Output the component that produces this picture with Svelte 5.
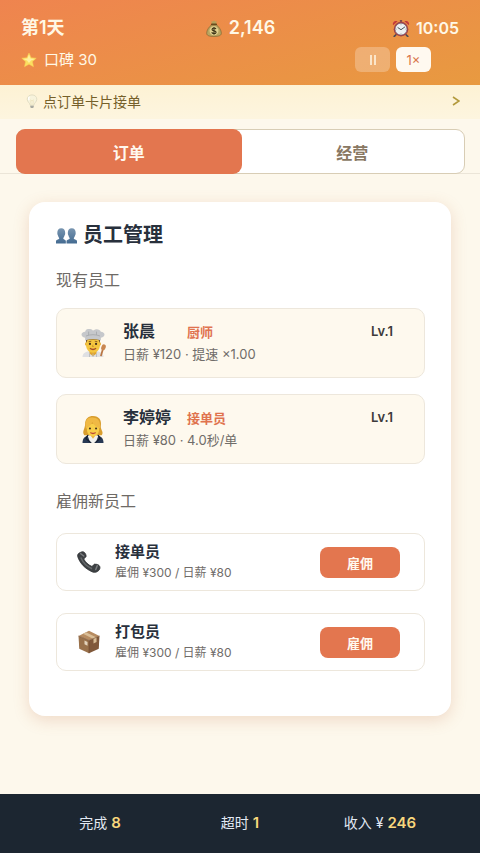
<script lang="ts">
	let tab: string = $state('orders');
	let paused: boolean = $state(false);

	const staff = [
		{ icon: 'chef', name: '张晨', role: '厨师', detail: '日薪 ¥120 · 提速 ×1.00', level: 1 },
		{ icon: 'clerk', name: '李婷婷', role: '接单员', detail: '日薪 ¥80 · 4.0秒/单', level: 1 }
	];

	const openings = [
		{ icon: 'phone', role: '接单员', detail: '雇佣 ¥300 / 日薪 ¥80' },
		{ icon: 'box', role: '打包员', detail: '雇佣 ¥300 / 日薪 ¥80' }
	];

	const totals = [
		{ label: '完成', value: 8 },
		{ label: '超时', value: 1 },
		{ label: '收入 ¥', value: 246 }
	];
</script>

{#snippet icon(name: string, size: number)}
	<svg width={size} height={size} viewBox="0 0 32 32" aria-hidden="true">
		{#if name === 'money'}
			<path d="M11 3l3 2 2-3 2 3 3-2-2 7h-6z" fill="#b3a05c" />
			<path d="M12 10c-5 4-9 10-9 15 0 4 3 6 13 6s13-2 13-6c0-5-4-11-9-15z" fill="#b9a561" stroke="#6c5b2c" />
			<path d="M12 9.500h8" stroke="#6a4a1c" stroke-width="3" stroke-linecap="round" />
			<circle cx="16" cy="21" r="8" fill="#e2d190" />
			<path d="M19.500 18c-.6-1.500-2-2-3.500-2-2 0-3.500 1-3.500 2.500 0 3.500 7.200 1.500 7.200 5 0 1.600-1.700 2.500-3.700 2.500s-3.500-.8-4-2.500M16 14v14" fill="none" stroke="#3c3216" stroke-width="2" />
		{:else if name === 'star'}
			<path d="M16 2l4.300 9.300 10.200 1.100-7.600 6.900 2.100 10.100L16 24.300 7 29.400l2.100-10.100-7.600-6.900 10.200-1.100z" fill="#fbdf62" stroke="#f8cf52" stroke-linejoin="round" />
			<path d="M16 5l3 8 9 1-8 3-4 5-4-5-8-3 9-1z" fill="#fff0a0" />
		{:else if name === 'clock'}
			<path d="M7 28l-3 3M25 28l3 3" stroke="#4d4a55" stroke-width="3" stroke-linecap="round" />
			<path d="M2 11c-2-5 3-9 8-7zM30 11c2-5-3-9-8-7z" fill="#c4393b" />
			<path d="M16 5V2" stroke="#754149" stroke-width="4" />
			<circle cx="16" cy="18" r="13" fill="#a23f48" />
			<circle cx="16" cy="18" r="10.500" fill="#edf0f2" stroke="#6c606a" />
			<path d="M10 15l6 4 7-5" fill="none" stroke="#374147" stroke-width="1.600" />
			<path d="M16 9v2M16 25v2M7 18h2M23 18h2" stroke="#8d979b" />
		{:else if name === 'bulb'}
			<path d="M16 2C9 2 5 7 5 12c0 6 6 8 7 14h8c1-6 7-8 7-14 0-5-4-10-11-10z" fill="#f7f3dc" stroke="#d6d2b8" stroke-width="1.500" />
			<path d="M12 13l4 3 4-3M14 25l-1-10M18 25l1-10" fill="none" stroke="#e3d6a4" />
			<path d="M12 27h8v3l-2 2h-4l-2-2z" fill="#a9aaa1" />
			<path d="M10 6c-2 2-2 5-1 8" fill="none" stroke="#fff" stroke-width="3" />
		{:else if name === 'people'}
			<defs>
				<linearGradient id="people-fill" x2="0" y2="1">
					<stop stop-color="#7895b0" />
					<stop offset="1" stop-color="#446b91" />
				</linearGradient>
			</defs>
			<path d="M8 5c-4 0-6 3-6 7 0 2 .5 3 1 4 .5 2 1 3 2 4 0 2-4 2-5 4v4h15v-4c-1-2-4-2-4-4 1-1 1.500-2 2-4 .7-1 1-2 1-4 0-4-2-7-6-7z" fill="url(#people-fill)" />
			<path d="M24 5c-4 0-6 3-6 7 0 2 .5 3 1 4 .5 2 1 3 2 4 0 2-4 2-5 4v4h16v-4c-1-2-5-2-5-4 1-1 1.500-2 2-4 .7-1 1-2 1-4 0-4-2-7-6-7z" fill="url(#people-fill)" />
		{:else if name === 'chef'}
			<path d="M4 32c0-5 4-7 12-7s12 2 12 7z" fill="#dfe0e2" />
			<path d="M12 24h8v4l-4 3-4-3z" fill="#dfa52f" />
			<path d="M8 10v8c0 6 4 9 8 9s8-3 8-9v-8z" fill="#f5c63f" />
			<path d="M7.500 15c-1 0-1 4 1 4zM24.500 15c1 0 1 4-1 4z" fill="#e6ad31" />
			<path d="M8 10v6l2-4h12l2 4v-6z" fill="#70502e" />
			<path d="M7 10C1 9 2 3 7 3c1-4 7-4 9-1 3-3 8-2 9 1 5 0 6 6 0 7v3c-6-2-12-2-18 0z" fill="#c6c8cb" />
			<path d="M8 8c5-2 11-2 16 0M11 3v4M20 3v4" fill="none" stroke="#a7a9ad" />
			<circle cx="12.500" cy="17" r="1.300" fill="#49331d" />
			<circle cx="19.500" cy="17" r="1.300" fill="#49331d" />
			<path d="M11 14.500l3-.5M18 14l3 .5" stroke="#8a5d21" />
			<path d="M12.500 22c2 1.700 5 1.700 7 0" fill="none" stroke="#a64d2a" stroke-width="1.500" />
			<path d="M16 18l-.7 2h1.500" fill="none" stroke="#cc8f26" />
			<path d="M16 28v4M12 28v4M20 28v4" stroke="#b8babd" />
			<path d="M27 24l-2 7" stroke="#b97643" stroke-width="2" />
			<ellipse cx="28" cy="21" rx="2.500" ry="3.500" fill="#ca8750" transform="rotate(20 28 21)" />
		{:else if name === 'clerk'}
			<path d="M6 23C3 19 7 16 7 10 7 4 11 1 16 1c7 0 10 5 9 11-1 5 4 7 1 11z" fill="#d99e2e" />
			<path d="M4 32c0-6 3-8 8-9h8c5 1 8 3 8 9z" fill="#283954" />
			<path d="M12 22h8l1 3-5 7-5-7z" fill="#edb73f" />
			<path d="M10 24l3-1 3 4 3-4 3 1-3 8h-6z" fill="#f1f1ed" />
			<path d="M10 23l-2 4 6 5M22 23l2 4-6 5" fill="none" stroke="#151e30" stroke-width="1.300" />
			<path d="M9 10v6c0 5 3 8 7 8s7-3 7-8v-6z" fill="#f8cf4a" />
			<path d="M8 16C6 5 10 2 17 3c5 0 8 5 7 12-4-1-7-3-9-7-1 4-4 5-7 8z" fill="#f0b944" />
			<circle cx="12.500" cy="15.500" r="1.200" fill="#49331d" />
			<circle cx="19.500" cy="15.500" r="1.200" fill="#49331d" />
			<path d="M13 20c2 1.500 4 1.500 6 0" fill="none" stroke="#bc473a" stroke-width="1.500" />
		{:else if name === 'phone'}
			<path d="M5 3c3-2 6 0 7 4 1 3-2 3-3 5 2 4 6 8 11 10 2-1 2-4 5-3 4 0 7 3 5 7-2 3-6 5-10 3C11 25 4 18 1 9 0 6 2 4 5 3z" fill="#3e4144" stroke="#282b2e" />
			<path d="M5 10c3 7 8 12 15 15" fill="none" stroke="#666a6c" stroke-width="2" />
			<path d="M5 5l4 3M27 21l-2 5" stroke="#7b7e80" stroke-width="2" stroke-linecap="round" />
		{:else if name === 'box'}
			<path d="M2 8l14 6v17L3 25z" fill="#99714b" />
			<path d="M30 8l-14 6v17l13-6z" fill="#80583a" />
			<path d="M2 8l14-7 14 7-14 6z" fill="#b78c61" />
			<path d="M8 5l4-2 14 7v6l-4 2v-6z" fill="#d9bd96" />
			<path d="M16 14v17M2 8l14 6 14-6" fill="none" stroke="#6f4c31" stroke-width=".8" />
			<path d="M10 14l4 2v5l-4-2z" fill="#e3d3bc" />
		{/if}
	</svg>
{/snippet}

<div class="page">
	<header>
		<div class="stats">
			<strong>第1天</strong>
			<strong class="stat">{@render icon('money', 18)} 2,146</strong>
			<strong class="stat time">{@render icon('clock', 18)} 10:05</strong>
		</div>
		<div class="controls">
			<span class="fame">{@render icon('star', 16)} 口碑 30</span>
			<button class="speed" class:on={paused} aria-label="暂停" onclick={() => (paused = !paused)}>
				<svg width="8" height="12" viewBox="0 0 8 12"><path d="M2 1v10M6 1v10" stroke="currentColor" stroke-width="1.500" /></svg>
			</button>
			<button class="speed" class:on={!paused} onclick={() => (paused = false)}>1×</button>
		</div>
	</header>

	<button class="hint">
		{@render icon('bulb', 14)}
		<span>点订单卡片接单</span>
		<svg width="8" height="10" viewBox="0 0 8 10"><path d="M1 1l6 4-6 4" fill="none" stroke="#b39a3c" stroke-width="1.600" /></svg>
	</button>

	<nav>
		<div class="tabs">
			<button class:active={tab === 'orders'} onclick={() => (tab = 'orders')}>订单</button>
			<button class:active={tab === 'manage'} onclick={() => (tab = 'manage')}>经营</button>
		</div>
	</nav>

	<main>
		<section class="card">
			<h1>{@render icon('people', 21)} 员工管理</h1>

			<h2>现有员工</h2>
			<ul class="staff">
				{#each staff as person}
					<li>
						{@render icon(person.icon, 28)}
						<div class="info">
							<div class="line">
								<span class="name">{person.name}</span>
								<span class="role">{person.role}</span>
								<span class="level">Lv.{person.level}</span>
							</div>
							<p>{person.detail}</p>
						</div>
					</li>
				{/each}
			</ul>

			<h2>雇佣新员工</h2>
			<ul class="openings">
				{#each openings as opening}
					<li>
						{@render icon(opening.icon, 24)}
						<div class="info">
							<span class="name">{opening.role}</span>
							<p>{opening.detail}</p>
						</div>
						<button class="hire">雇佣</button>
					</li>
				{/each}
			</ul>
		</section>
	</main>

	<footer>
		{#each totals as total}
			<span>{total.label} <b>{total.value}</b></span>
		{/each}
	</footer>
</div>

<style>
	:global(body) {
		margin: 0;
	}

	.page {
		display: flex;
		flex-direction: column;
		min-height: 100vh;
		background: #fdf8ec;
		color: #28303c;
		font-family: Inter, 'Noto Sans CJK SC', sans-serif;
		font-size: 13px;
	}

	button {
		margin: 0;
		padding: 0;
		border: 0;
		font: inherit;
		cursor: pointer;
	}

	svg {
		flex: none;
	}

	header {
		padding: 15px 21px 13px;
		background: linear-gradient(165deg, #ef844f, #e89a40);
		color: #fff8e6;
	}

	.stats {
		display: grid;
		grid-template-columns: 1fr auto 1fr;
		align-items: center;
		font-size: 18px;
		line-height: 26px;
	}

	.stats strong {
		font-weight: 600;
	}

	.stat {
		display: flex;
		align-items: center;
		gap: 6px;
	}

	.stats .time {
		justify-content: flex-end;
		font-size: 16px;
	}

	.controls {
		display: flex;
		align-items: center;
		gap: 6px;
		padding: 6px 28px 0 0;
	}

	.fame {
		display: flex;
		flex: 1;
		align-items: center;
		gap: 7px;
		font-size: 15px;
		line-height: 24px;
	}

	.speed {
		display: flex;
		align-items: center;
		justify-content: center;
		width: 35px;
		height: 25px;
		border-radius: 6px;
		background: rgba(255, 255, 255, 0.25);
		color: #fff8e6;
	}

	.speed.on {
		background: #fff9f0;
		color: #d9754c;
	}

	.hint {
		display: flex;
		align-items: center;
		gap: 4px;
		height: 34px;
		padding: 0 20px 2px 25px;
		background: linear-gradient(#fdf2d4, #fdf5df);
		color: #75602a;
		font-size: 14px;
		text-align: left;
	}

	.hint span {
		flex: 1;
	}

	nav {
		padding: 10px 15px 0 16px;
		border-bottom: 1px solid #ebe5d8;
	}

	.tabs {
		display: flex;
		height: 45px;
		margin-bottom: -1px;
		box-sizing: border-box;
		border: 1px solid #d8cdb5;
		border-radius: 9px;
		background: #fff;
	}

	.tabs button {
		flex: 1;
		margin: -1px;
		border-radius: 9px;
		background: none;
		color: #897863;
		font-size: 16px;
		font-weight: 600;
	}

	.tabs .active {
		background: #e3764f;
		color: #fff8ee;
	}

	main {
		flex: 1;
		padding: 28px 29px 76px;
	}

	.card {
		padding: 18px 26px 45px 27px;
		border-radius: 16px;
		background: #fff;
		box-shadow: 0 4px 16px rgba(190, 110, 70, 0.22);
	}

	h1 {
		display: flex;
		align-items: center;
		gap: 6px;
		margin: 0 0 16px;
		font-size: 20px;
		font-weight: 600;
		line-height: 30px;
	}

	h2 {
		margin: 0 0 14px;
		color: #6e6a66;
		font-size: 16px;
		font-weight: 400;
		line-height: 28px;
	}

	ul {
		display: grid;
		margin: 0;
		padding: 0;
		list-style: none;
	}

	li {
		display: flex;
		box-sizing: border-box;
		align-items: center;
		border: 1px solid #ede7dc;
		border-radius: 10px;
	}

	.staff {
		gap: 16px;
		margin-bottom: 23px;
	}

	.staff li {
		gap: 16px;
		height: 70px;
		padding: 0 22px;
		background: #fef9ee;
	}

	.staff .info {
		padding-bottom: 2px;
	}

	.openings {
		gap: 22px;
		margin-top: 18px;
	}

	.openings li {
		gap: 14px;
		height: 58px;
		padding: 0 24px 0 20px;
	}

	.info {
		flex: 1;
	}

	.line {
		display: grid;
		grid-template-columns: 48px 1fr auto;
		align-items: center;
		column-gap: 16px;
		padding-right: 9px;
	}

	.name {
		display: block;
		font-size: 16px;
		font-weight: 600;
		line-height: 24px;
		white-space: nowrap;
	}

	.openings .name {
		font-size: 15px;
		line-height: 22px;
	}

	.role {
		color: #e0734e;
		font-weight: 600;
	}

	.level {
		color: #3d3b3b;
		font-weight: 600;
	}

	p {
		margin: 0;
		color: #706c69;
		line-height: 22px;
	}

	.openings p {
		font-size: 12px;
		line-height: 20px;
	}

	.hire {
		width: 80px;
		height: 31px;
		border-radius: 8px;
		background: #e3764f;
		color: #fff8ee;
		font-weight: 600;
	}

	footer {
		display: grid;
		grid-template-columns: repeat(3, 1fr);
		padding: 18px 30px 19px;
		background: #1c2631;
		color: #e2e9f3;
		font-size: 14px;
		line-height: 22px;
		text-align: center;
	}

	footer b {
		color: #f8d77c;
		font-size: 15px;
		font-weight: 600;
	}
</style>
